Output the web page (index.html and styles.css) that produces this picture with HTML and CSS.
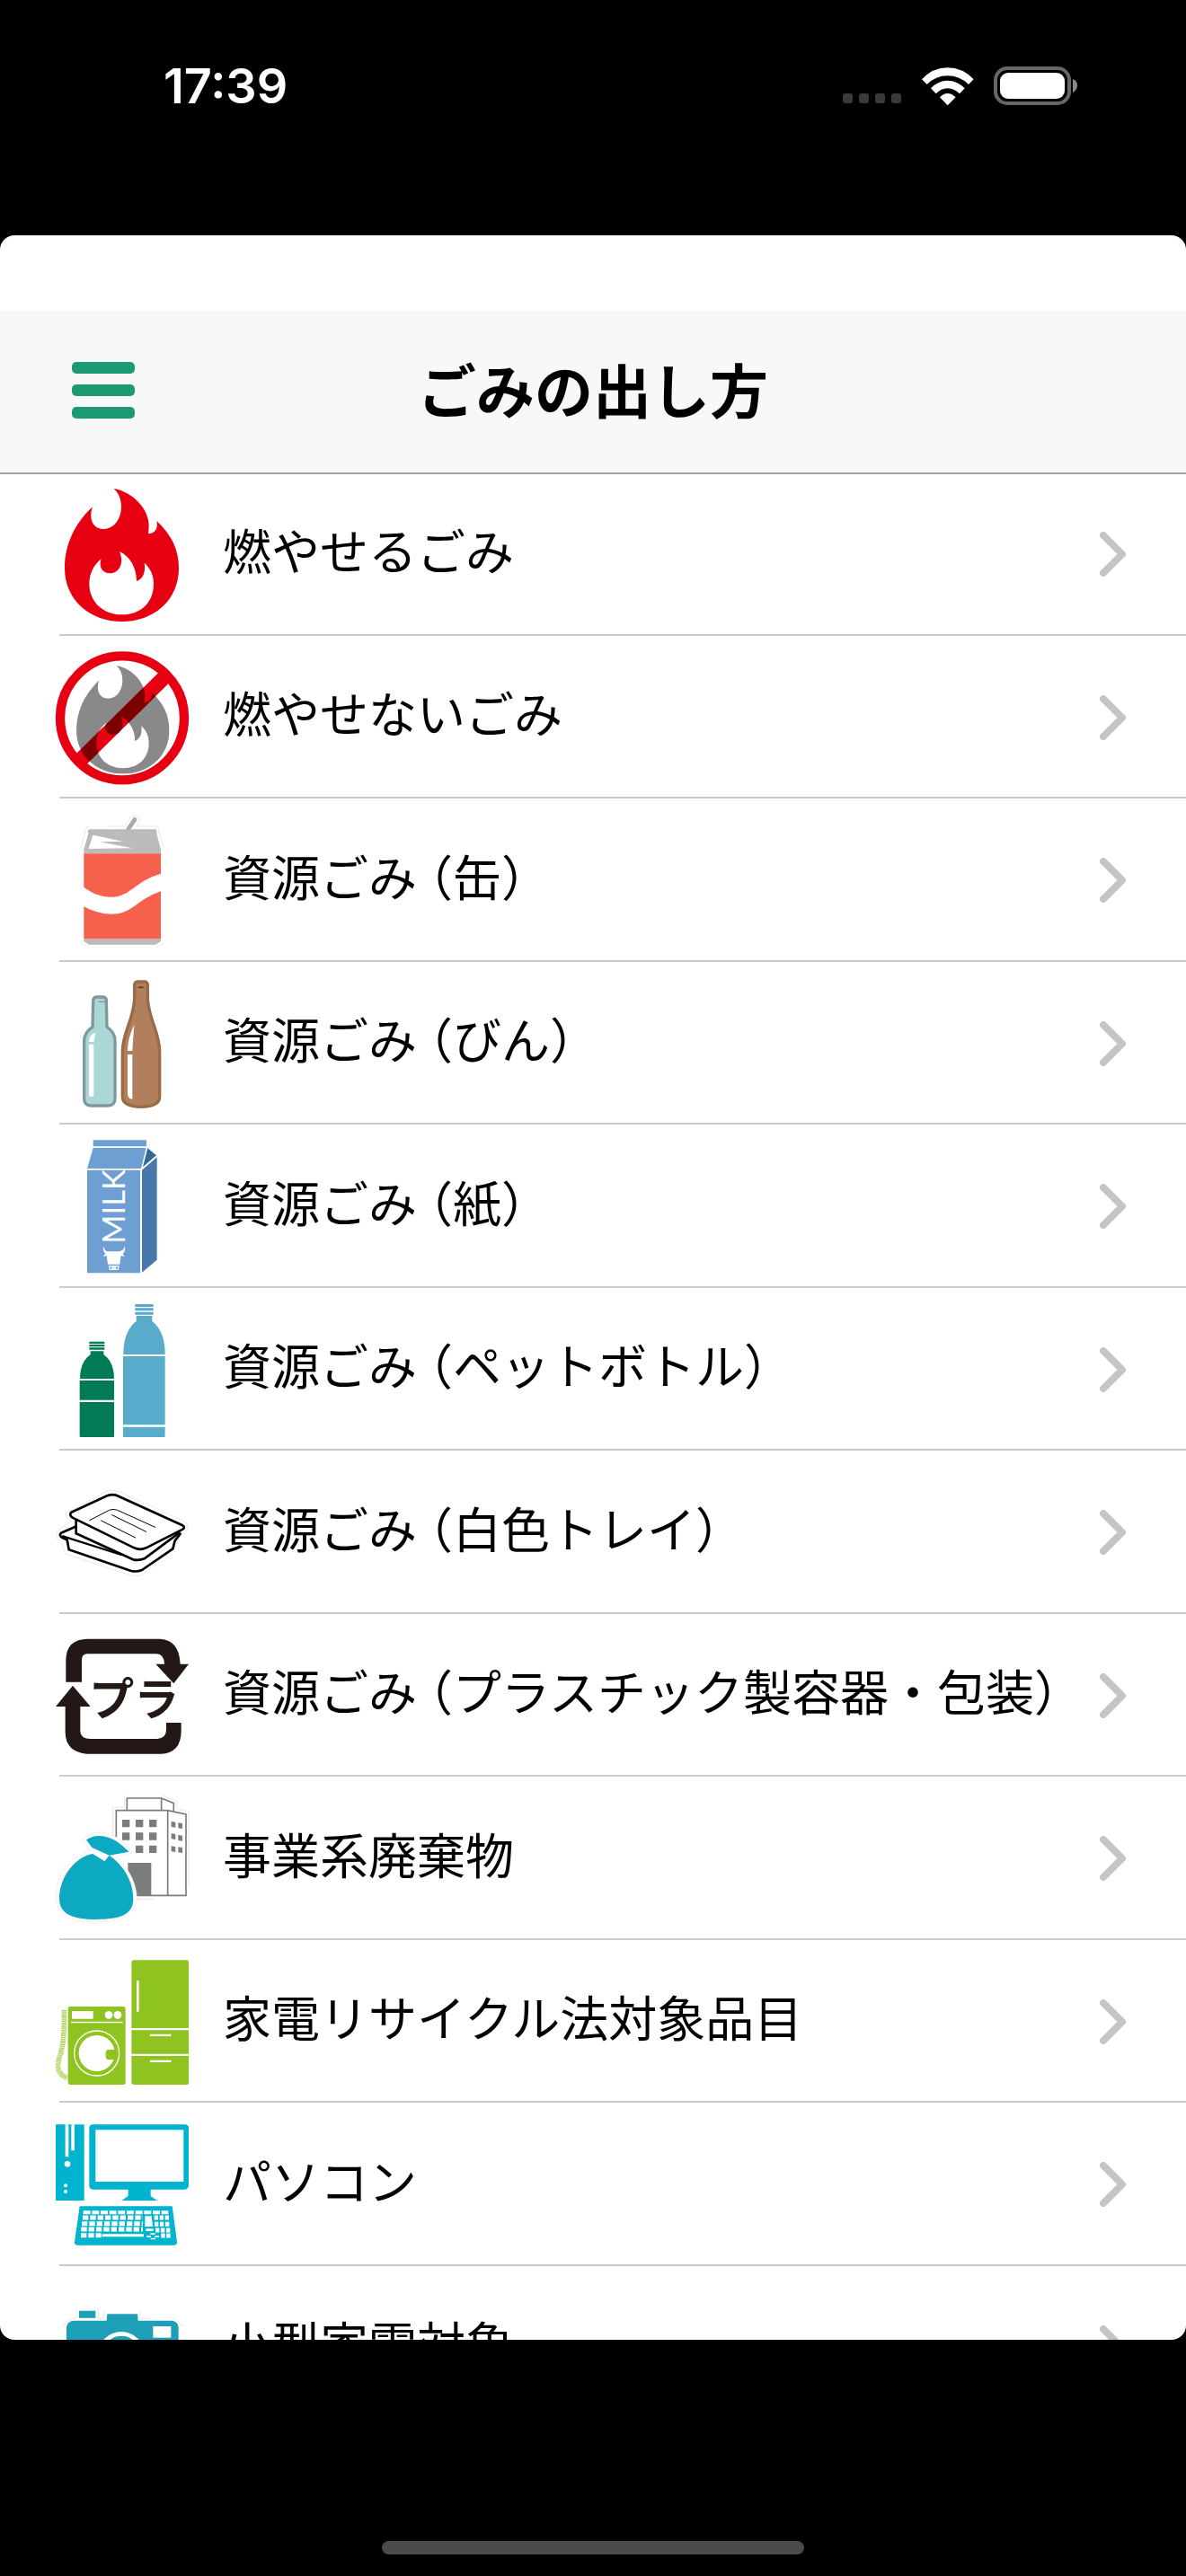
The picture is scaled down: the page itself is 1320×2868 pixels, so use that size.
FILE: index.html
```
<!DOCTYPE html>
<html lang="ja">
<head>
<meta charset="utf-8">
<meta name="viewport" content="width=device-width, initial-scale=1">
<title>ごみの出し方</title>
<link rel="stylesheet" href="styles.css">
</head>
<body>
<div class="status-bar">
  <time class="clock">17:39</time>
  <div class="status-icons">
    <svg class="signal" viewBox="0 0 66 12" aria-hidden="true"><g fill="#3a3a3a"><rect width="11" height="11" rx="3"/><rect x="18" width="11" height="11" rx="3"/><rect x="36" width="11" height="11" rx="3"/><rect x="54" width="11" height="11" rx="3"/></g></svg>
    <svg class="wifi" viewBox="374 98 174 129" aria-hidden="true"><g fill="#fff"><path d="M374 138Q410 99 460 99T547 138L530 155Q500 126 460 126T391 155Z"/><path d="M404 168Q428 142 460 142T517 168L500 186Q482 168 460 168T421 186Z"/><path d="M434 198Q446 185 460 185T487 198L460 225Z"/></g></svg>
    <svg class="battery" viewBox="0 0 94 44" aria-hidden="true"><rect x="2" y="2" width="82" height="39" rx="13" fill="none" stroke="#676767" stroke-width="4"/><rect x="7" y="7" width="72" height="29" rx="9" fill="#fff"/><path d="M88 14q5 2 5 7t-5 8z" fill="#8a8a8a"/></svg>
  </div>
</div>

<div class="sheet">
  <header class="header">
    <button class="menu-button" type="button" aria-label="メニュー"><span class="menu-line"></span><span class="menu-line"></span><span class="menu-line"></span></button>
    <h1 class="title">ごみの出し方</h1>
  </header>
  <ul class="list">
    <li class="item"><a class="row" href="#burnable">
      <svg class="icon" viewBox="63 63 450 450" aria-hidden="true">
        <path fill="#e60012" fill-rule="evenodd" d="M260 69C325 80 379 140 377 195L375 220C395 220 410 203 403 177C455 225 477 275 477 335C477 440 395 513 287 513C180 513 96 440 96 335C96 250 135 180 189 130C175 170 190 205 227 204C265 203 285 165 285 130C285 105 277 85 260 69ZM279 279C315 295 336 335 336 378C355 372 368 350 362 317C383 335 393 360 393 387C393 450 350 490 287 490C222 490 178 445 178 387C178 355 192 325 218 304C208 330 222 353 250 352C280 350 295 315 279 279Z"/>
      </svg>
      <span class="label">燃やせるごみ</span>
      <svg class="chevron" viewBox="0 0 30 50" aria-hidden="true"><path d="M4 4l21 21L4 46"/></svg>
    </a></li>
    <li class="item"><a class="row" href="#non-burnable">
      <svg class="icon" viewBox="63 609 450 450" aria-hidden="true">
        <defs><clipPath id="flame"><path clip-rule="evenodd" transform="translate(57 604) scale(.814)" d="M260 69C325 80 379 140 377 195L375 220C395 220 410 203 403 177C455 225 477 275 477 335C477 440 395 513 287 513C180 513 96 440 96 335C96 250 135 180 189 130C175 170 190 205 227 204C265 203 285 165 285 130C285 105 277 85 260 69ZM279 279C315 295 336 335 336 378C355 372 368 350 362 317C383 335 393 360 393 387C393 450 350 490 287 490C222 490 178 445 178 387C178 355 192 325 218 304C208 330 222 353 250 352C280 350 295 315 279 279Z"/></clipPath></defs>
        <rect x="63" y="609" width="450" height="450" fill="#898989" clip-path="url(#flame)"/>
        <circle cx="288" cy="835" r="207" fill="none" stroke="#e60012" stroke-width="31"/>
        <path d="M150 974L430 698" stroke="#e60012" stroke-width="49"/>
        <g clip-path="url(#flame)"><path d="M150 974L385 742" stroke="#7d0000" stroke-width="49"/></g>
      </svg>
      <span class="label">燃やせないごみ</span>
      <svg class="chevron" viewBox="0 0 30 50" aria-hidden="true"><path d="M4 4l21 21L4 46"/></svg>
    </a></li>
    <li class="item"><a class="row" href="#cans">
      <svg class="icon" viewBox="63 42 450 450" aria-hidden="true">
        <path fill="none" stroke="#dcdcdc" stroke-width="2" d="M150 160L166 98Q168 88 178 87M244 87H297L318 54Q330 44 344 55Q350 64 344 74L336 87H402Q412 90 411 105L428 160M150 476L177 491M428 476L401 491"/>
        <path d="M307 98L330 64" stroke="#aaa" stroke-width="14" stroke-linecap="round"/>
        <path fill="#bbb" d="M178 97H400Q404 98 403 110L417 165V178H160V165L175 110Q172 98 178 97ZM160 463H417V471L400 482H177L160 471Z"/>
        <path fill="#fff" d="M190 116L290 137L213 139L322 160L176 162Z"/>
        <path fill="#f5614c" d="M160 178H417V245C330 270 315 323 252 323C210 323 180 305 160 290ZM160 355C185 368 215 380 252 380C325 380 330 335 417 304V463H160Z"/>
      </svg>
      <span class="label">資源ごみ<span class="paren">（</span>缶）</span>
      <svg class="chevron" viewBox="0 0 30 50" aria-hidden="true"><path d="M4 4l21 21L4 46"/></svg>
    </a></li>
    <li class="item"><a class="row" href="#bottles">
      <svg class="icon" viewBox="63 588 450 450" aria-hidden="true">
        <path fill="#abd7d5" stroke="#7f989f" stroke-width="10" d="M202 657H224Q235 658 235 670L237 757Q264 775 264 803V996Q264 1020 240 1020H184Q161 1020 161 996V803Q161 775 189 757L191 670Q192 658 202 657Z"/>
        <path d="M209 673H232" stroke="#7f989f" stroke-width="4"/>
        <path fill="#fff" d="M177 807Q178 779 200 776L193 807ZM177 815H193V989H177Z"/>
        <path fill="#b27f5d" stroke="#9a6a49" stroke-width="10" d="M338 606H364Q374 608 373 622V665C378 735 413 775 413 840V990Q413 1023 351 1024Q289 1023 289 990V840C289 775 324 740 329 665V622Q328 608 338 606Z"/>
        <ellipse cx="351" cy="625" rx="11" ry="3" fill="#68452d"/>
        <path fill="#fff" d="M328 749Q325 790 322 837H306Q306 795 328 749ZM306 849H322V998Q306 997 306 980Z"/>
      </svg>
      <span class="label">資源ごみ<span class="paren">（</span>びん）</span>
      <svg class="chevron" viewBox="0 0 30 50" aria-hidden="true"><path d="M4 4l21 21L4 46"/></svg>
    </a></li>
    <li class="item"><a class="row" href="#paper">
      <svg class="icon" viewBox="63 53 450 450" aria-hidden="true">
        <path fill="#6e9fd2" d="M191 57H369V78H191ZM191 83H368L351 152H171ZM171 157H348V501H171Z"/>
        <path fill="#346697" d="M373 84L402 108L357 147Z"/>
        <path fill="#4678aa" d="M354 157L404 114V457L354 499Z"/>
        <text class="milk-text" transform="translate(298 403) rotate(-90)">MILK</text>
        <path fill="#fff" d="M225 411Q229 430 243 429H278Q293 427 297 411Q300 427 290 438L297 446L284 443L280 472H240L236 443L223 446L232 437Q222 427 225 411ZM243 476H278L276 491H245Z"/>
        <path fill="#6e9fd2" d="M248 480h5v8h-5zM268 480h5v8h-5zM256 483h3v3h-3zM262 483h3v3h-3z"/>
      </svg>
      <span class="label">資源ごみ<span class="paren">（</span>紙）</span>
      <svg class="chevron" viewBox="0 0 30 50" aria-hidden="true"><path d="M4 4l21 21L4 46"/></svg>
    </a></li>
    <li class="item"><a class="row" href="#pet">
      <svg class="icon" viewBox="63 597 450 450" aria-hidden="true">
        <path fill="#007b55" d="M178 728h51v7h-51zM178 738h51v7h-51zM178 748h51v7h-51zM182 760H226V771Q261 795 261 852H147Q147 795 182 771ZM146 858H261V923H146ZM146 930H261V1044Q261 1047 258 1047H149Q146 1047 146 1044Z"/>
        <path fill="#58abca" d="M331 603h61v9h-61zM331 616h61v9h-61zM331 629h61v9h-61zM335 642H388V660Q431 693 431 771H292Q292 693 335 660ZM291 777H431V1006H291ZM291 1013H431V1043Q431 1047 427 1047H295Q291 1047 291 1043Z"/>
      </svg>
      <span class="label">資源ごみ<span class="paren">（</span>ペットボトル）</span>
      <svg class="chevron" viewBox="0 0 30 50" aria-hidden="true"><path d="M4 4l21 21L4 46"/></svg>
    </a></li>
    <li class="item"><a class="row" href="#trays">
      <svg class="icon" viewBox="63 32 450 450" aria-hidden="true">
        <g stroke-linejoin="round" stroke-linecap="round">
          <path fill="none" stroke="#ddd" stroke-width="2" stroke-dasharray="8 3" d="M240 118Q255 113 276 120L500 222Q510 232 506 246L475 278L470 302L352 402H322L100 330Q92 322 90 298L70 278Q66 260 76 250L118 220Q98 212 102 192Z"/>
          <path fill="#fff" stroke="#000" stroke-width="8" d="M132 238L84 259Q76 268 88 275L104 282L110 315L318 386Q338 390 354 383L457 312L464 285L482 262"/>
          <path fill="none" stroke="#000" stroke-width="7" d="M90 270L285 332"/>
          <path fill="#fff" stroke="#000" stroke-width="8" d="M134 216V261L324 348Q345 352 362 345L475 261L480 250"/>
          <path fill="#fff" stroke="#000" stroke-width="8" d="M118 190L238 135Q255 128 270 134L488 233Q500 240 490 247L368 309Q348 318 328 309L122 208Q110 200 118 190Z"/>
          <path fill="none" stroke="#000" stroke-width="3" d="M179 217L245 183Q258 177 272 183L398 240M254 199L368 255M218 218L332 275"/>
          <path d="M215 302L292 334L262 318Z"/>
        </g>
      </svg>
      <span class="label">資源ごみ<span class="paren">（</span>白色トレイ）</span>
      <svg class="chevron" viewBox="0 0 30 50" aria-hidden="true"><path d="M4 4l21 21L4 46"/></svg>
    </a></li>
    <li class="item"><a class="row" href="#plastic">
      <svg class="icon" viewBox="63 576 450 450" aria-hidden="true">
        <g fill="#231815">
          <path d="M100 755V680Q102 612 172 611H415Q478 614 482 695H510L460 760L400 695H429Q428 662 402 661H172Q153 661 153 682V755Z"/>
          <path d="M123 767L182 837H148V920Q150 945 182 945H405Q435 943 435 915V891H485V920Q484 992 417 995H168Q100 988 98 925V837H66Z"/>
          <text class="mark-text" x="178" y="868">プラ</text>
        </g>
      </svg>
      <span class="label">資源ごみ<span class="paren">（</span>プラスチック製容器・包装）</span>
      <svg class="chevron" viewBox="0 0 30 50" aria-hidden="true"><path d="M4 4l21 21L4 46"/></svg>
    </a></li>
    <li class="item"><a class="row" href="#business">
      <svg class="icon" viewBox="63 41 450 450" aria-hidden="true">
        <path fill="none" stroke="#ddd" stroke-width="2" d="M295 54V96H257V190M423 55L470 76V100L510 110V362M336 402H396"/>
        <g fill="#fff" stroke="#7b7c7c" stroke-width="5"><path d="M304 106V65H419L460 82V110M419 65V106M268 106H440L501 119V390H268ZM440 106V390"/></g>
        <path fill="#7b7c7c" d="M288 137h25v25h-25zM333 137h25v25h-25zM378 137h25v25h-25zM288 180h25v25h-25zM333 180h25v25h-25zM378 180h25v25h-25zM333 223h25v25h-25zM378 223h25v25h-25zM307 281h78v109h-78zM452 143l14 2v18l-14-2zM475 147l14 2v18l-14-2zM452 183l14 2v18l-14-2zM475 188l14 2v18l-14-2zM452 225l14 2v18l-14-2zM475 228l14 2v18l-14-2z"/>
        <path fill="#fff" d="M154 201Q180 180 210 180Q280 182 322 248L270 260Q337 330 337 401Q330 475 201 480Q70 480 67 400Q67 280 180 240Z" stroke="#ddd" stroke-width="2" stroke-dasharray="7 3"/>
        <path fill="#0da8c1" d="M168 204Q188 191 210 191C260 192 290 225 311 244L245 256L187 230ZM190 251L229 276L245 256C300 295 325 350 325 402C325 455 280 470 201 470C120 470 78 450 78 400C78 330 130 260 190 251Z"/>
      </svg>
      <span class="label">事業系廃棄物</span>
      <svg class="chevron" viewBox="0 0 30 50" aria-hidden="true"><path d="M4 4l21 21L4 46"/></svg>
    </a></li>
    <li class="item"><a class="row" href="#appliances">
      <svg class="icon" viewBox="63 585 450 450" aria-hidden="true">
        <path d="M94 771C94 830 95 865 83 915C66 960 72 983 104 998" fill="none" stroke="#a9d256" stroke-width="17" stroke-dasharray="4 2"/>
        <g fill="#8fc31f"><rect x="107" y="759" width="192" height="261" rx="7"/><path d="M328 604H503Q510 604 510 611V831H319V613Q319 604 328 604ZM319 838H510V917H319ZM319 924H510V1013Q510 1020 503 1020H328Q319 1020 319 1011Z"/></g>
        <g fill="#fff"><path d="M120 774h71v26h-71zM117 809h173v5H117zM336 672h8v104h-8zM381 851h70v7h-70zM381 938h70v7h-70z"/><circle cx="243" cy="787" r="13"/><circle cx="273" cy="787" r="13"/><circle cx="203" cy="915" r="60"/></g>
        <circle cx="203" cy="915" r="75" fill="none" stroke="#fff" stroke-width="4"/>
        <path fill="#8fc31f" d="M265 903H243Q233 904 233 913V926Q234 936 243 936H265Z"/>
      </svg>
      <span class="label">家電リサイクル法対象品目</span>
      <svg class="chevron" viewBox="0 0 30 50" aria-hidden="true"><path d="M4 4l21 21L4 46"/></svg>
    </a></li>
    <li class="item"><a class="row" href="#computers">
      <svg class="icon" viewBox="33 20 450 450" aria-hidden="true">
        <path fill="#00b3cf" fill-rule="evenodd" d="M36 45H131V299H36ZM160 45H467Q480 46 480 57V249Q479 261 467 262H353V284L375 299H256L278 284V262H160Q148 261 148 249V57Q148 46 160 45ZM169 63V236H463V63ZM116 318H425L441 438Q441 448 432 448H107Q99 448 99 438Z"/>
        <g fill="#fff"><path d="M68 45h11v108H68zM88 45h11v87H88z"/><circle cx="75" cy="177" r="10"/><circle cx="69" cy="249" r="6"/><circle cx="69" cy="269" r="6"/><path d="M191 411H330V420H191ZM334 351h22l4 35h-26zM337 393h25v8h-25zM352 408h16v5h-16zM340 416h14v6h-14zM367 416h14v6h-14zM353 424h16v5h-16z"/></g>
        <g fill="none" stroke="#fff">
          <path stroke-width="12" stroke-dasharray="24 5" d="M128 339H412"/>
          <path stroke-width="15" stroke-dasharray="19 6" d="M126 356H327M123 376H327M121 395H327M120 415H188"/>
          <path stroke-width="15" stroke-dasharray="13 5" d="M365 356H414M366 378H416M369 398H418M388 416H421"/>
        </g>
      </svg>
      <span class="label">パソコン</span>
      <svg class="chevron" viewBox="0 0 30 50" aria-hidden="true"><path d="M4 4l21 21L4 46"/></svg>
    </a></li>
    <li class="item"><a class="row" href="#small-appliances">
      <svg class="icon" viewBox="183 -6 450 450" aria-hidden="true">
        <path fill="none" stroke="#ddd" stroke-width="2" d="M214 147Q218 122 256 121V87M328 87V121H347V98M468 98V121H505M575 121Q600 126 602 147"/>
        <path fill="#1d9fb7" d="M264 95H319V119H264ZM358 106H459L461 128H574Q594 130 596 150V370H222V150Q224 130 246 128H356Z"/>
        <path fill="#fff" d="M511 147h60v38h-60z"/>
        <circle cx="405" cy="242" r="70" fill="#1d9fb7" stroke="#fff" stroke-width="14"/>
      </svg>
      <span class="label">小型家電対象</span>
      <svg class="chevron" viewBox="0 0 30 50" aria-hidden="true"><path d="M4 4l21 21L4 46"/></svg>
    </a></li>
  </ul>
</div>

<div class="home-area"><div class="home-indicator"></div></div>
</body>
</html>
```
FILE: styles.css
```
* {
  box-sizing: border-box;
}

body {
  margin: 0;
  height: 100vh;
  display: flex;
  flex-direction: column;
  overflow: hidden;
  background: #000;
  color: #000;
  font-family: "Noto Sans CJK JP", sans-serif;
}

.status-bar {
  flex: none;
  height: 262px;
  padding: 62px 120px 0 182px;
  display: flex;
  align-items: flex-start;
  justify-content: space-between;
  color: #fff;
}

.clock {
  font: 600 54px/68px Inter, sans-serif;
}

.status-icons {
  height: 68px;
  display: flex;
  align-items: center;
  gap: 22px;
}

.signal {
  width: 66px;
  height: 12px;
  margin-top: 28px;
}

.wifi {
  width: 58px;
  height: 43px;
}

.battery {
  width: 94px;
  height: 44px;
}

.sheet {
  flex: 1;
  min-height: 0;
  padding-top: 84px;
  overflow: hidden;
  border-radius: 16px;
  background: #fff;
}

.header {
  height: 182px;
  padding: 0 80px 4px;
  display: grid;
  grid-template-columns: 70px 1fr 70px;
  align-items: center;
  background: #f7f8f7;
  border-bottom: 2px solid #a3a3a3;
}

.menu-button {
  width: 70px;
  padding: 0;
  display: grid;
  gap: 12px;
  border: 0;
  background: none;
}

.menu-line {
  height: 13px;
  border-radius: 5px;
  background: #1b9a74;
}

.title {
  margin: 0;
  padding-bottom: 4px;
  font-size: 65px;
  line-height: 80px;
  font-weight: 700;
  text-align: center;
}

.list {
  margin: -2px 0 0;
  padding: 0;
  list-style: none;
}

.item {
  height: 181px;
  padding-left: 61px;
}

.item:nth-child(odd) {
  height: 182px;
}

.row {
  height: 100%;
  padding-right: 66px;
  display: flex;
  align-items: center;
  color: inherit;
  text-decoration: none;
  background: linear-gradient(#cacaca, #cacaca) 5px 100% / 100% 2px no-repeat;
}

.icon {
  flex: none;
  width: 150px;
  height: 150px;
  margin-right: 37px;
}

.label {
  flex: 1;
  padding-bottom: 11px;
  font-size: 54px;
  line-height: 80px;
  white-space: nowrap;
}

/* Half-width setting of the opening bracket, as in proportional Japanese type. */
.paren {
  padding-left: 13px;
  font-feature-settings: "halt";
}

.chevron {
  flex: none;
  width: 30px;
  height: 50px;
  fill: none;
  stroke: #c5c5c7;
  stroke-width: 8px;
  stroke-linecap: round;
  stroke-linejoin: round;
}

.milk-text {
  font: 400 104px Lato, sans-serif;
  fill: #fff;
}

.mark-text {
  font: 700 150px "Noto Sans CJK JP", sans-serif;
}

.home-area {
  flex: none;
  height: 263px;
  padding-bottom: 24px;
  display: flex;
  align-items: flex-end;
  justify-content: center;
}

.home-indicator {
  width: 470px;
  height: 15px;
  border-radius: 8px;
  background: #4b4b4b;
}
```
